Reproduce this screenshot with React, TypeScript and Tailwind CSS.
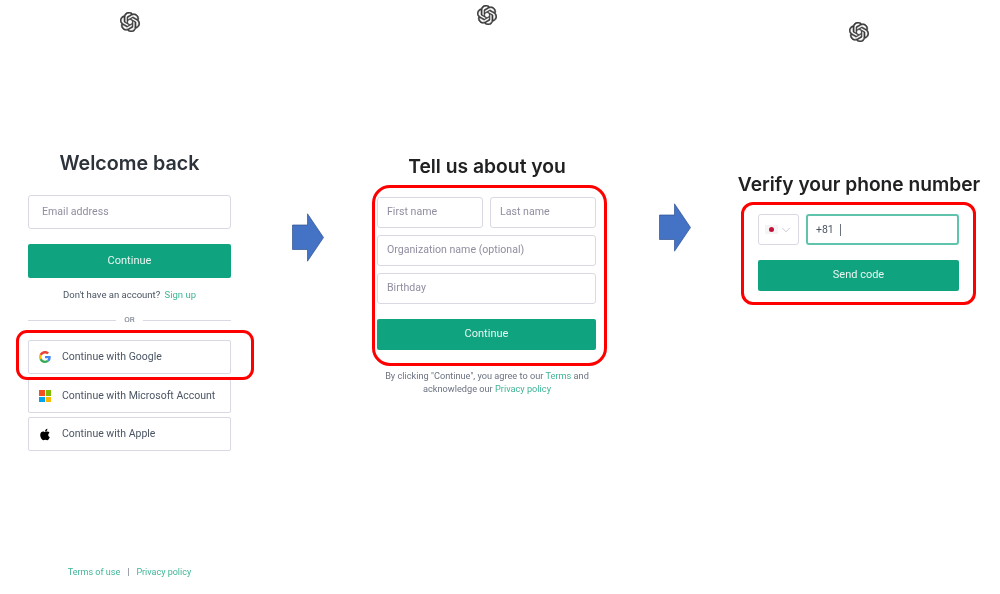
import { FaApple } from "react-icons/fa";
import { SiOpenai } from "react-icons/si";
import { ChevronDown } from "lucide-react";

const inputClass =
  "block w-full rounded-[3px] border border-[#d9d9e3] bg-white pb-[2px] text-[10.6px] text-[#2d333a] placeholder-[#8e8ea0] outline-none";
const greenButton =
  "flex w-full items-center justify-center rounded-[2px] bg-[#10a37f] text-[11px] font-normal text-[#e8f6f2]";
const logoClass = "shrink-0 text-[#3a3a3a]";

function Arrow() {
  return (
    <svg width="33" height="50" viewBox="0 0 33 50" className="block">
      <path d="M0.5 12H15.5V0.8L31.5 24.5L15.5 48.2V36.5H0.5Z" fill="#4472c4" stroke="#2f528f" strokeWidth="0.7" />
    </svg>
  );
}

function GoogleIcon() {
  return (
    <svg width="12" height="12" viewBox="0 0 48 48">
      <path fill="#EA4335" d="M24 9.5c3.5 0 6.700 1.200 9.200 3.600l6.900-6.900C35.900 2.400 30.500 0 24 0 14.600 0 6.500 5.400 2.600 13.200l8 6.200C12.400 13.700 17.700 9.500 24 9.500z" />
      <path fill="#4285F4" d="M46.900 24.500c0-1.600-.2-3.100-.4-4.500H24v9h12.900c-.6 3-2.200 5.500-4.700 7.200l7.700 6c4.500-4.200 7-10.300 7-17.700z" />
      <path fill="#FBBC05" d="M10.500 28.600c-.5-1.400-.8-3-.8-4.600s.3-3.200.8-4.600l-8-6.200C.9 16.500 0 20.100 0 24s.9 7.500 2.600 10.800l7.900-6.200z" />
      <path fill="#34A853" d="M24 48c6.500 0 11.900-2.100 15.900-5.800l-7.700-6c-2.200 1.400-4.900 2.300-8.200 2.300-6.300 0-11.600-4.200-13.500-10l-7.900 6.200C6.500 42.600 14.600 48 24 48z" />
    </svg>
  );
}

function MicrosoftIcon() {
  return (
    <div className="grid h-3 w-3 shrink-0 grid-cols-2 gap-px">
      <div className="bg-[#f25022]" />
      <div className="bg-[#7fba00]" />
      <div className="bg-[#00a4ef]" />
      <div className="bg-[#ffb900]" />
    </div>
  );
}

function SocialButton({ icon, label, className }: { icon: React.ReactNode; label: string; className: string }) {
  return (
    <button className={`flex h-[34px] w-full items-center rounded-[2px] border border-[#d9d9e3] bg-white pl-[10px] text-[10.5px] whitespace-nowrap text-[#4b5563] ${className}`}>
      <span className="flex w-[12px] items-center justify-center">{icon}</span>
      <span className="ml-[11px]">{label}</span>
    </button>
  );
}

export default function App() {
  return (
    <div className="flex h-[594px] w-[1000px] overflow-hidden bg-white font-['Roboto',sans-serif] blur-[0.35px]">
      {/* Login */}
      <div className="ml-[28px] flex w-[203px] flex-col items-center pt-[12px]">
        <SiOpenai size={20} stroke="currentColor" strokeWidth={0.5} className={logoClass} />
        <h1 className="mt-[118px] font-['Inter',sans-serif] text-[19.7px] leading-[26px] font-semibold text-[#2d333a]">Welcome back</h1>
        <input className={`${inputClass} mt-[19px] h-[34px] pl-[13px]`} placeholder="Email address" />
        <button className={`${greenButton} mt-[15px] h-[34px]`}>Continue</button>
        <p className="mt-[10px] text-[9.5px] leading-[14px] text-[#4b5563]">
          Don't have an account? <span className="ml-[2px] text-[#3fb596]">Sign up</span>
        </p>
        <div className="mt-[13px] flex w-full items-center">
          <div className="h-px flex-1 bg-[#d9d9e3]" />
          <span className="px-[8px] text-[8px] leading-[10px] text-[#6b7280]">OR</span>
          <div className="h-px flex-1 bg-[#d9d9e3]" />
        </div>
        <div className="relative mt-[15px] w-full">
          <SocialButton icon={<GoogleIcon />} label="Continue with Google" className="" />
          <div className="pointer-events-none absolute -top-[10px] -right-[23px] -bottom-[6px] -left-[12px] rounded-[11px] border-[3px] border-[#ff0000]" />
        </div>
        <SocialButton icon={<MicrosoftIcon />} label="Continue with Microsoft Account" className="mt-[5px]" />
        <SocialButton icon={<FaApple size={13} className="text-black" />} label="Continue with Apple" className="mt-[4px]" />
        <div className="mt-[115px] flex items-center text-[9px] leading-[12px] text-[#3fb596]">
          <span>Terms of use</span>
          <span className="mx-[7px] text-[#6b7280]">|</span>
          <span>Privacy policy</span>
        </div>
      </div>

      <div className="mt-[213px] ml-[61px]">
        <Arrow />
      </div>

      {/* About you */}
      <div className="ml-[47px] flex w-[230px] flex-col items-center pt-[5px]">
        <SiOpenai size={20} stroke="currentColor" strokeWidth={0.5} className={logoClass} />
        <h1 className="mt-[128px] font-['Inter',sans-serif] text-[19.3px] leading-[26px] font-semibold text-[#202123]">Tell us about you</h1>
        <div className="mt-[6px] flex w-[235px] shrink-0 flex-col self-start rounded-[18px] border-[3px] border-[#ff0000] pt-[9px] pr-[8px] pb-[13px] pl-[2px]">
          <div className="flex gap-[7px]">
            <input className={`${inputClass} h-[31px] min-w-0 pl-[9px]`} placeholder="First name" />
            <input className={`${inputClass} h-[31px] min-w-0 pl-[9px]`} placeholder="Last name" />
          </div>
          <input className={`${inputClass} mt-[7px] h-[31px] pl-[9px]`} placeholder="Organization name (optional)" />
          <input className={`${inputClass} mt-[7px] h-[31px] pl-[9px]`} placeholder="Birthday" />
          <button className={`${greenButton} mt-[15px] h-[31px]`}>Continue</button>
        </div>
        <p className="mt-[3px] w-[220px] text-center text-[9.2px] leading-[13px] text-[#6b7280]">
          By clicking "Continue", you agree to our <span className="text-[#3fb596]">Terms</span> and acknowledge our{" "}
          <span className="text-[#3fb596]">Privacy policy</span>
        </p>
      </div>

      <div className="mt-[203px] ml-[57px]">
        <Arrow />
      </div>

      {/* Phone */}
      <div className="ml-[46px] flex w-[242px] flex-col items-center pt-[22px]">
        <SiOpenai size={20} stroke="currentColor" strokeWidth={0.5} className={logoClass} />
        <h1 className="mt-[129px] font-['Inter',sans-serif] text-[19.2px] leading-[26px] font-semibold whitespace-nowrap text-[#202123]">Verify your phone number</h1>
        <div className="mt-[5px] ml-[3px] flex w-[235px] flex-col self-start rounded-[12px] border-[3px] border-[#ff0000] px-[14px] pt-[9px] pb-[11px]">
          <div className="flex gap-[7px]">
            <div className="flex h-[31px] w-[41px] items-center gap-[1px] rounded-[3px] border border-[#d9d9e3] pl-[6px]">
              <span className="flex h-[9px] w-[13px] items-center justify-center bg-[#f4f4f4]">
                <span className="h-[5px] w-[5px] rounded-full bg-[#c4103a]" />
              </span>
              <ChevronDown size={14} strokeWidth={1} className="text-[#9ca3af]" />
            </div>
            <div className="flex h-[31px] flex-1 items-center rounded-[3px] border-2 border-[#5fc4ab] pl-[8px] text-[10.5px] text-[#4b5563]">
              +81
              <span className="ml-[6px] h-[12px] w-px bg-[#6b7280]" />
            </div>
          </div>
          <button className={`${greenButton} mt-[15px] h-[31px]`}>Send code</button>
        </div>
      </div>
    </div>
  );
}
